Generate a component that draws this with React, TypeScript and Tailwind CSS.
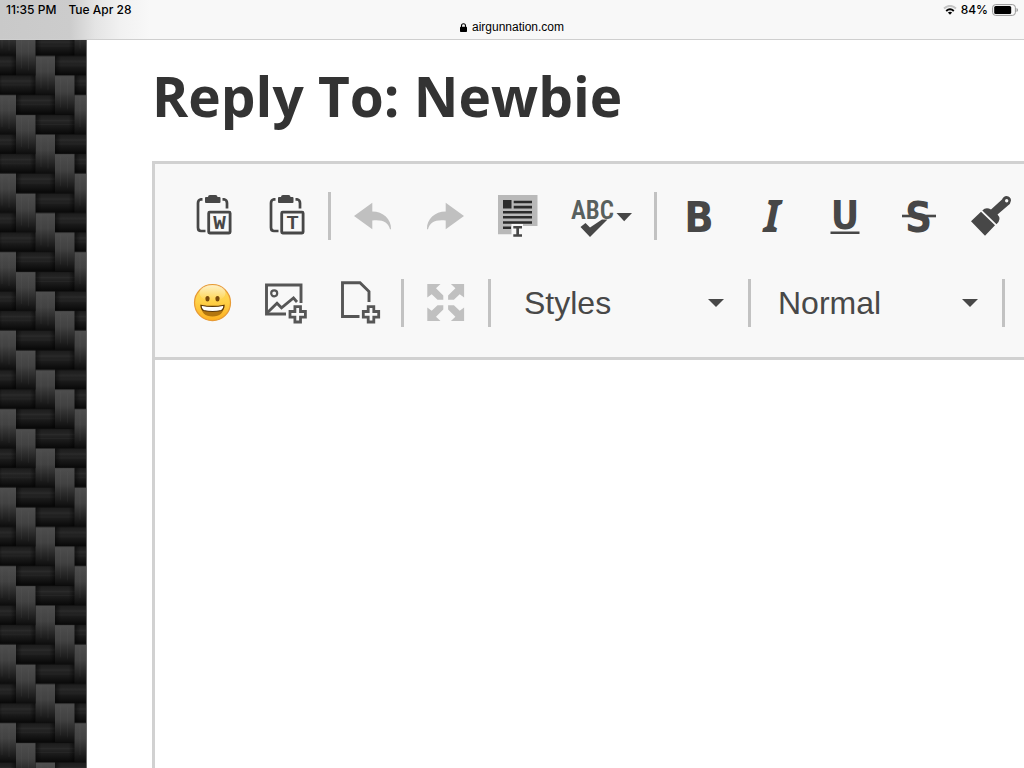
import type { ReactNode } from 'react';

const INK = '#474747';
const LINE = '#565656';
const MUTED = '#c0c0c0';

function Weave() {
  const uprights = [
    [16, 59.5],
    [35.5, 0.5],
    [55, 20],
    [74.5, 39.5],
    [-3.5, 39.5],
    [16, -19],
    [55, -58.5],
    [74.5, -39],
    [-3.5, -39],
  ];
  const bands = [
    [16, 39.5],
    [35.5, 59.5],
    [55, 0.5],
    [-23, 0.5],
    [-3.5, 20],
    [74.5, 20],
  ];
  return (
    <svg className="w-full flex-1" aria-hidden="true">
      <defs>
        <linearGradient id="upright" x1="0" y1="0" x2="0" y2="1">
          <stop offset="0" stopColor="#4e4e4e" />
          <stop offset="0.4" stopColor="#424242" />
          <stop offset="0.75" stopColor="#232323" />
          <stop offset="1" stopColor="#0d0d0d" />
        </linearGradient>
        <linearGradient id="band" x1="0" y1="0" x2="0" y2="1">
          <stop offset="0" stopColor="#1c1c1c" />
          <stop offset="0.3" stopColor="#262626" />
          <stop offset="0.6" stopColor="#1a1a1a" />
          <stop offset="1" stopColor="#080808" />
        </linearGradient>
        <linearGradient id="bandEnds">
          <stop offset="0" stopColor="#000" stopOpacity="0.5" />
          <stop offset="0.15" stopColor="#000" stopOpacity="0" />
          <stop offset="0.85" stopColor="#000" stopOpacity="0" />
          <stop offset="1" stopColor="#000" stopOpacity="0.5" />
        </linearGradient>
        <pattern id="weave" y="15.5" width="94" height="78.5" patternUnits="userSpaceOnUse">
          <rect width="94" height="79" fill="#0a0a0a" />
          {bands.map(([x, y]) => (
            <g key={`b${x}-${y}`}>
              <rect x={x} y={y} width="39" height="19" fill="url(#band)" />
              <path d={`M${x} ${y + 5.5}h39M${x} ${y + 9.5}h39`} stroke="#3a3a3a" strokeOpacity="0.25" />
              <rect x={x} y={y} width="39" height="19" fill="url(#bandEnds)" />
            </g>
          ))}
          {uprights.map(([x, y]) => (
            <g key={`u${x}-${y}`}>
              <rect x={x} y={y} width="19.500" height="39" fill="url(#upright)" />
              <path d={`M${x + 5.5} ${y + 2}v30M${x + 12.5} ${y + 4}v30`} stroke="#707070" strokeOpacity="0.1" />
            </g>
          ))}
        </pattern>
      </defs>
      <rect width="100%" height="100%" fill="url(#weave)" />
    </svg>
  );
}

function Tool({ label, wide, children }: { label: string; wide?: boolean; children: ReactNode }) {
  return (
    <button
      type="button"
      aria-label={label}
      className={wide ? 'flex h-12 w-[92px] shrink-0 justify-center' : 'flex h-12 w-[72px] shrink-0 justify-center'}
    >
      <svg
        className={wide ? 'h-12 w-[92px] overflow-visible' : 'h-12 w-12 overflow-visible'}
        viewBox={wide ? '0 0 92 48' : '0 0 48 48'}
        fill={INK}
        aria-hidden="true"
      >
        {children}
      </svg>
    </button>
  );
}

function Separator() {
  return <span className="mx-1.5 h-12 w-[3px] shrink-0 bg-[#c2c2c2]" />;
}

function Clipboard() {
  return (
    <>
      <path d="M17 5H19Q19 3 21 3H26.500Q28.500 3 28.500 5H30.500Q31.500 5 31.500 6V10Q31.500 11 30.500 11H17Q16 11 16 10V6Q16 5 17 5Z" />
      <path
        d="M13.500 7.300H12Q9 8 9 11V35.500Q9 39 12 39H16.500M33.500 7.300H35Q38 8 38 11V16.500"
        fill="none"
        stroke={INK}
        strokeWidth="2.700"
      />
      <rect x="19.700" y="20.200" width="21.400" height="20.800" rx="1" fill="none" stroke={INK} strokeWidth="2.800" />
    </>
  );
}

function Plus({ x }: { x: number }) {
  return (
    <path
      transform={`translate(${x} 35.300)`}
      d="M-2.800-7.700H2.800V-2.800H7.700V2.800H2.800V7.700H-2.800V2.800H-7.700V-2.800H-2.800Z"
      fill="#f8f8f8"
      stroke={LINE}
      strokeWidth="2.800"
    />
  );
}

const UNDO = 'M5 24L23.300 10.700V19.500C34 19.500 42.500 27 42 37.300H41C39 30 34 27.500 23.300 28.500V37.300Z';
const CORNER = 'M5.300 5H18.500L14 9.300L21.300 16.500V20.800H15.500L9.700 15.300L5.300 18.500Z';

function Combo({ label, value, options }: { label: string; value: string; options: string[] }) {
  return (
    <div className="relative flex h-12 w-[245px] shrink-0 items-center">
      <select
        aria-label={label}
        defaultValue={value}
        className="h-12 w-full appearance-none bg-transparent pl-[27px] font-['Liberation_Sans',Arial,sans-serif] text-[32px] text-[#484848]"
      >
        {options.map((o) => (
          <option key={o}>{o}</option>
        ))}
      </select>
      <svg className="pointer-events-none absolute right-[18px] h-2 w-4" viewBox="0 0 16 8" fill="#484848" aria-hidden="true">
        <path d="M0 0H16L8 8Z" />
      </svg>
    </div>
  );
}

function StatusBar() {
  return (
    <header className="h-10 shrink-0 border-b border-[#cfcfcf] bg-[linear-gradient(90deg,#c9c9c9_0,#cccccc_70px,#e4e4e4_95px,#f1f1f1_120px,#f8f8f8_150px)] font-[Inter,sans-serif] text-black">
      <div className="flex h-5 items-center justify-between px-1.5 text-xs font-medium">
        <div className="flex gap-3">
          <span>11:35 PM</span>
          <span>Tue Apr 28</span>
        </div>
        <div className="flex items-center gap-1">
          <svg className="h-[10px] w-[14px]" viewBox="0 0 14 10" fill="none" aria-label="Wi-Fi">
            <path d="M1 3.600Q7-1.800 13 3.600" stroke="#c4c4c4" strokeWidth="2" />
            <path d="M3.200 6Q7 2.600 10.800 6" stroke="#000" strokeWidth="1.900" />
            <path d="M4.900 7.600Q7 5.900 9.100 7.600L7 9.800Z" fill="#000" />
          </svg>
          <span>84%</span>
          <svg className="h-3 w-[26px]" viewBox="0 0 26 12" aria-label="Battery">
            <rect x=".6" y=".6" width="22.800" height="10.800" rx="3" fill="none" stroke="#979797" />
            <rect x="2.200" y="2" width="17" height="8" rx="1.500" />
            <path d="M24.500 4Q26 4.500 26 6T24.500 8Z" fill="#979797" />
          </svg>
        </div>
      </div>
      <div className="flex h-3.5 items-center justify-center gap-[5px] font-['Liberation_Sans',Arial,sans-serif] text-xs">
        <svg className="h-[9px] w-[7px]" viewBox="0 0 7 9" aria-hidden="true">
          <rect y="3.800" width="7" height="5.200" rx=".8" />
          <path d="M1.500 4.500V2.800A2 2 0 0 1 5.500 2.800V4.500" fill="none" stroke="#000" strokeWidth="1.100" />
        </svg>
        <span>airgunnation.com</span>
      </div>
    </header>
  );
}

export default function App() {
  return (
    <div className="flex h-screen flex-col overflow-hidden bg-white">
      <StatusBar />
      <div className="flex min-h-0 flex-1">
        <aside className="flex w-[87px] shrink-0 flex-col border-r border-[#6b6b6b] bg-black">
          <Weave />
        </aside>
        <main className="flex min-w-0 flex-1 flex-col pt-6 pl-[65px]">
          <h1 className="font-['Open_Sans','Noto_Sans',sans-serif] text-[55px] leading-[64px] font-bold whitespace-nowrap text-[#333333]">
            Reply To: Newbie
          </h1>
          <form className="mt-[33px] flex min-h-0 flex-1 flex-col overflow-hidden border-t-[3px] border-l-[3px] border-[#d1d1d1]">
            <div
              role="toolbar"
              aria-label="Editor toolbar"
              className="flex shrink-0 flex-col gap-[39px] border-b-[3px] border-[#d1d1d1] bg-[#f8f8f8] pt-7 pb-[30px] pl-[22px]"
            >
              <div className="flex">
                <div className="flex gap-px">
                  <Tool label="Paste from Word">
                    <Clipboard />
                    <text x="30.500" y="37" textAnchor="middle" fontFamily="Liberation Mono, monospace" fontWeight="700" fontSize="21">W</text>
                  </Tool>
                  <Tool label="Paste as plain text">
                    <Clipboard />
                    <text x="30.500" y="37" textAnchor="middle" fontFamily="Liberation Sans, sans-serif" fontWeight="700" fontSize="19">T</text>
                  </Tool>
                </div>
                <Separator />
                <div className="flex gap-px">
                  <Tool label="Undo">
                    <path d={UNDO} fill={MUTED} />
                  </Tool>
                  <Tool label="Redo">
                    <path d={UNDO} fill={MUTED} transform="translate(47 0) scale(-1 1)" />
                  </Tool>
                  <Tool label="Select all">
                    <path d="M3 3H42.500V34H28V32H16.500V42.300H3Z" fill="#b9b9b9" />
                    <path
                      d="M8 8H16.500V16.500H8ZM18.700 8.700H37V11.300H18.700ZM18.700 13.800H37V16.400H18.700ZM8 19H37V21.600H8ZM8 24H37V26.600H8ZM8 29.200H37V31.800H8ZM8 34.500H16V37.100H8Z"
                      fill="#2b2b2b"
                    />
                    <path d="M18.300 34H27V36.500H24V42.300H27V44.800H18.300V42.300H21.300V36.500H18.300Z" />
                  </Tool>
                  <Tool label="Spell check" wide>
                    <text x="36.500" y="26.500" textAnchor="middle" fontFamily="Roboto Condensed, Liberation Mono, monospace" fontWeight="600" fontSize="25" fill="#59605d">ABC</text>
                    <path d="M24.500 35L29.500 31L34 35.500L46 27.500H51.500L34 45Z" />
                    <path d="M60.500 21H76L68.200 29.300Z" />
                  </Tool>
                </div>
                <Separator />
                <div className="flex gap-px">
                  <Tool label="Bold">
                    <text x="24" y="40" textAnchor="middle" fontFamily="DejaVu Sans Condensed, DejaVu Sans, sans-serif" fontWeight="700" fontSize="43">B</text>
                  </Tool>
                  <Tool label="Italic">
                    <text x="24" y="40" textAnchor="middle" fontFamily="Noto Sans, sans-serif" fontStyle="italic" fontWeight="700" fontSize="44">I</text>
                  </Tool>
                  <Tool label="Underline">
                    <text x="24" y="36.500" textAnchor="middle" fontFamily="DejaVu Sans Condensed, DejaVu Sans, sans-serif" fontWeight="700" fontSize="39">U</text>
                    <rect x="9.500" y="39.500" width="29" height="2.500" />
                  </Tool>
                  <Tool label="Strikethrough">
                    <text x="24.500" y="39.500" textAnchor="middle" fontFamily="DejaVu Sans Condensed, DejaVu Sans, sans-serif" fontWeight="700" fontSize="42">S</text>
                    <rect x="8" y="22.700" width="34" height="2.600" />
                  </Tool>
                  <Tool label="Remove format">
                    <path
                      fillRule="evenodd"
                      d="M4 29.300L14 19.700L28 33.300L18 43.700ZM15.300 18.500Q19 14.500 24 17.500L35 7.500Q36.500 4 39.500 4Q44 4.500 44 8.500Q43.500 12 41 13.500L30.500 22.500Q35 27 29.500 32.200ZM39.700 7A1.700 1.700 0 1 0 39.700 10.400A1.700 1.700 0 1 0 39.700 7Z"
                    />
                  </Tool>
                </div>
              </div>
              <div className="flex">
                <div className="flex gap-px">
                  <Tool label="Insert emoji">
                    <defs>
                      <linearGradient id="face" x1="0" y1="0" x2="0" y2="1">
                        <stop offset="0" stopColor="#fdd75a" />
                        <stop offset="0.45" stopColor="#ffd24a" />
                        <stop offset="1" stopColor="#fdb01f" />
                      </linearGradient>
                      <linearGradient id="shine" x1="0" y1="0" x2="0" y2="1">
                        <stop offset="0" stopColor="#fff" stopOpacity="0.65" />
                        <stop offset="1" stopColor="#fff" stopOpacity="0" />
                      </linearGradient>
                    </defs>
                    <circle cx="23.500" cy="23.700" r="18" fill="url(#face)" stroke="#e79a35" strokeWidth="1.200" />
                    <ellipse cx="23.500" cy="14" rx="13" ry="8" fill="url(#shine)" />
                    <ellipse cx="18.500" cy="19.700" rx="2.100" ry="2.700" fill="#7a4a0c" />
                    <ellipse cx="28.500" cy="19.700" rx="2.100" ry="2.700" fill="#7a4a0c" />
                    <path d="M11.500 26Q23.500 28.500 35.500 26Q34.500 37.500 23.500 37.500T11.500 26Z" fill="#b3760f" />
                    <path d="M12 26.200Q23.500 28.600 35 26.200Q35 30 32.500 31.500Q23.500 33.500 14.500 31.500Q12 30 12 26.200Z" fill="#fff" stroke="#5d3906" strokeWidth="1.100" />
                  </Tool>
                  <Tool label="Insert image">
                    <path d="M39 24V6H4.500V35H24" fill="none" stroke={LINE} strokeWidth="2.900" />
                    <circle cx="12.200" cy="14.300" r="3" fill="none" stroke={LINE} strokeWidth="2.200" />
                    <path d="M5 34L15 24.300L19.500 28.800L31.500 19L35 23" fill="none" stroke={LINE} strokeWidth="2.800" />
                    <Plus x={35.700} />
                  </Tool>
                  <Tool label="Insert file">
                    <path d="M34 23V12.500L25 3.800H7.500V37.500H24.500" fill="none" stroke={LINE} strokeWidth="2.900" />
                    <Plus x={36} />
                  </Tool>
                </div>
                <Separator />
                <Tool label="Maximize">
                  <g fill={MUTED}>
                    <path d={CORNER} />
                    <path d={CORNER} transform="translate(47.400 0) scale(-1 1)" />
                    <path d={CORNER} transform="translate(0 47) scale(1 -1)" />
                    <path d={CORNER} transform="translate(47.400 47) scale(-1 -1)" />
                  </g>
                </Tool>
                <Separator />
                <Combo label="Styles" value="Styles" options={['Styles']} />
                <span className="ml-1.5 h-12 w-[3px] shrink-0 bg-[#c2c2c2]" />
                <Combo label="Paragraph format" value="Normal" options={['Normal', 'Heading 1', 'Heading 2']} />
                <Separator />
              </div>
            </div>
            <textarea aria-label="Reply" className="w-full flex-1 resize-none bg-white p-6 text-3xl outline-none" />
          </form>
        </main>
      </div>
    </div>
  );
}
